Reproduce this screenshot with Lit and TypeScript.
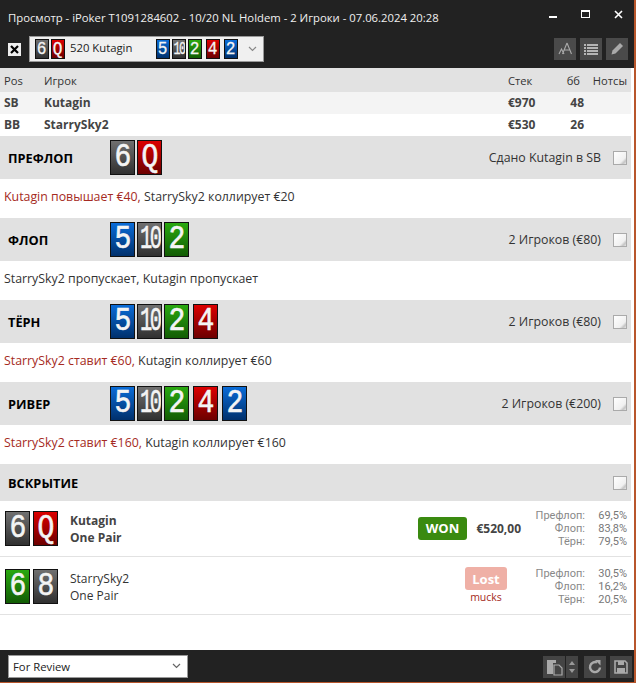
import { LitElement, html, css, svg } from "lit";
import { customElement } from "lit/decorators.js";

type C = [string, string];

@customElement("app-root")
export class AppRoot extends LitElement {
  static styles = css`
    :host { display: block; width: 636px; height: 683px; background: #b8562c; font-family: "Open Sans", "Noto Sans", sans-serif; font-size: 12px; color: #333; overflow: hidden; }
    .win { width: 634px; height: 682px; display: flex; flex-direction: column; background: #fff; }
    .title { height: 34px; flex: none; background: #222; color: #f0f0f0; display: flex; align-items: center; padding-left: 8px; font-size: 11.3px; }
    .wc { margin-left: auto; margin-right: -1.5px; display: flex; align-items: center; }
    .wc span { width: 33px; height: 20px; display: flex; align-items: center; justify-content: center; }
    .wc .up { position: relative; top: -3px; }
    .tool { height: 30px; padding-bottom: 4px; flex: none; background: #222; display: flex; align-items: center; padding-left: 8px; }
    .x { width: 13px; height: 13px; background: #eee; display: flex; align-items: center; justify-content: center; margin-right: 8px; }
    .combo { width: 235px; height: 26px; box-sizing: border-box; background: #f0f0f0; border: 1px solid #999; display: flex; align-items: center; padding-left: 5px; font-size: 11.3px; color: #222; }
    .combo .nm { margin-left: 5px; width: 86px; position: relative; top: -2px; }
    .tcards { display: flex; gap: 2px; }
    .tcards .gap { margin-left: 2px; }
    .combo .chev { margin-left: auto; margin-right: 6px; display: flex; }
    .tbtns { margin-left: auto; margin-right: 6px; display: flex; gap: 4px; }
    .tb { width: 22px; height: 22px; background: #4a4a4a; display: flex; align-items: center; justify-content: center; }
    .card { box-sizing: border-box; border: 1px solid #111; display: flex; align-items: center; justify-content: center; color: #f4f4f4; font-family: "Liberation Mono", "DejaVu Sans Mono", monospace; overflow: hidden; }
    .card span { display: inline-block; transform: scaleX(0.85); }
    .card.ten span { letter-spacing: -0.12em; transform: scaleX(0.62); }
    .card.big { width: 25px; height: 35px; font-size: 33px; -webkit-text-stroke: 0.6px #f4f4f4; }
    .card.sm { width: 14px; height: 20px; font-size: 19px; -webkit-text-stroke: 0.3px #f4f4f4; }
    .k { background: linear-gradient(#707070, #303030); }
    .h { background: linear-gradient(#dc0000, #6c0000); }
    .d { background: linear-gradient(#0a6cd8, #00306c); }
    .c { background: linear-gradient(#2aa810, #125c04); }
    .tbl { flex: none; margin-right: 3px; }
    .row { height: 22px; display: grid; grid-template-columns: 40px 464px 52px 24px 43px; align-items: center; padding-left: 4px; }
    .row.hd { height: 24px; background: #e2e2e2; padding-top: 1px; box-sizing: border-box; }
    .row.hd div { font-size: 11.2px; }
    .row.hd .bb { padding-right: 4px; }
    .row.a { background: #f4f4f4; }
    .row.p { font-weight: 700; color: #444; padding-bottom: 2px; box-sizing: border-box; }
    .r { text-align: right; }
    .sec { height: 43px; flex: none; background: #e1e1e1; display: flex; align-items: center; padding-left: 8px; margin-right: 3px; }
    .sec .lb { width: 102px; font-weight: 700; color: #000; font-size: 12.8px; }
    .sec .cards { display: flex; gap: 2px; }
    .sec .cards .gap { margin-left: 2px; }
    .sec .info { margin-left: auto; color: #333; font-size: 12.35px; }
    .chk { width: 14px; height: 14px; box-sizing: border-box; background: linear-gradient(135deg, #fff 0, #f0f0f0 70%, #c4c4c4 85%, #e8e8e8 100%); border: 1px solid #aaa; margin: 0 4px 0 12px; }
    .act { height: 34px; padding-bottom: 5px; flex: none; display: flex; align-items: center; padding-left: 4px; font-size: 12.35px; }
    .red { color: #a52a22; }
    .sec.sd { height: 37px; }
    .pl { flex: none; height: 56px; box-sizing: border-box; display: flex; align-items: center; padding: 0 0 1px 5px; border-bottom: 1px solid #e2e2e2; margin-right: 3px; }
    .pl.two { height: 58px; padding-top: 2px; }
    .pl .cards { display: flex; gap: 3px; }
    .who { margin-left: 12px; margin-top: 2px; line-height: 17px; }
    .who.b { font-weight: 700; color: #444; }
    .res { margin-left: auto; display: flex; align-items: center; }
    .won { background: #3a8a10; color: #fff; font-weight: 700; font-size: 13px; border-radius: 3px; width: 49px; height: 23px; display: flex; align-items: center; justify-content: center; }
    .amt { font-weight: 700; color: #444; width: 54px; text-align: right; }
    .lost { width: 42px; margin-right: 14px; display: flex; flex-direction: column; align-items: center; }
    .lostb { background: #efb0a6; color: #fff; font-weight: 700; font-size: 13px; border-radius: 3px; width: 42px; height: 23px; display: flex; align-items: center; justify-content: center; }
    .mucks { color: #a52a22; font-size: 10.5px; line-height: 15px; }
    .eq { margin-left: 12px; width: 94px; display: grid; grid-template-columns: 1fr 42px; font-family: Roboto, "Open Sans", sans-serif; font-size: 11px; line-height: 13px; color: #888; margin-right: 4px; text-align: right; }
    .eq span, .eq b { justify-self: end; }
    .eq b { font-weight: 400; color: #777; }
    .sp { flex: 1; }
    .foot { height: 32px; flex: none; background: #222; display: flex; align-items: center; padding-left: 8px; }
    .sel { width: 180px; height: 23px; box-sizing: border-box; background: #fff; border: 1px solid #999; display: flex; align-items: center; padding: 0 4px; font-size: 11.3px; color: #222; }
    .sel svg { margin-left: auto; margin-right: 2px; }
    .fbtns { margin-left: auto; margin-right: 2px; display: flex; align-items: center; position: relative; top: 1px; }
    .fb { height: 22px; background: #444; display: flex; align-items: center; justify-content: center; width: 22px; }
    .fb.arrows { width: 12px; margin: 0 6px 0 1px; }
    .fb.re { margin-right: 4px; }
  `;

  card(v: string, s: string, size: string, gap = false) {
    return html`<div class="card ${size} ${s} ${v === "10" ? "ten" : ""} ${gap ? "gap" : ""}"><span>${v}</span></div>`;
  }
  cards(list: C[], size = "big") {
    return list.map(([v, s], i) => this.card(v, s, size, i > 2));
  }
  sec(label: string, list: C[], info: string) {
    return html`<div class="sec"><div class="lb">${label}</div><div class="cards">${this.cards(list)}</div><div class="info">${info}</div><div class="chk"></div></div>`;
  }
  eq(a: string, b: string, c: string) {
    return html`<div class="eq"><span>Префлоп:</span><b>${a}</b><span>Флоп:</span><b>${b}</b><span>Тёрн:</span><b>${c}</b></div>`;
  }
  render() {
    const hole: C[] = [["6", "k"], ["Q", "h"]];
    const flop: C[] = [["5", "d"], ["10", "k"], ["2", "c"]];
    const turn: C[] = [...flop, ["4", "h"]];
    const river: C[] = [...turn, ["2", "d"]];
    const pencil = svg`<path d="M2.5 13.5 L3.5 9.5 L11 2 L14 5 L6.5 12.5 Z" fill="#aaa"/>`;
    return html`<div class="win">
      <div class="title">Просмотр - iPoker T1091284602 - 10/20 NL Holdem - 2 Игроки - 07.06.2024 20:28
        <div class="wc">
          <span><svg width="10" height="10"><rect x="1" y="4" width="8" height="2" fill="#fff"/></svg></span>
          <span class="up"><svg width="10" height="10"><rect x="0.5" y="1.5" width="8" height="7" fill="none" stroke="#fff"/><rect x="0" y="1" width="9" height="2" fill="#fff"/></svg></span>
          <span class="up"><svg width="10" height="10"><path d="M1 2 L8 9 M8 2 L1 9" stroke="#fff" stroke-width="1.6"/></svg></span>
        </div>
      </div>
      <div class="tool">
        <div class="x"><svg width="9" height="9"><path d="M1 1 L8 8 M8 1 L1 8" stroke="#000" stroke-width="2.2"/></svg></div>
        <div class="combo">
          <div class="tcards">${this.cards(hole, "sm")}</div>
          <div class="nm">520 Kutagin</div>
          <div class="tcards">${this.cards(river, "sm")}</div>
          <div class="chev"><svg width="9" height="6"><path d="M1 1 L4.5 4.5 L8 1" fill="none" stroke="#888" stroke-width="1.2"/></svg></div>
        </div>
        <div class="tbtns">
          <div class="tb"><svg width="18" height="16"><path d="M3 13 L5.5 8 L8 13 M11 2 L6.5 13 M11 2 L15.5 13 M8.5 9 H13.5" fill="none" stroke="#aaa" stroke-width="1.1"/></svg></div>
          <div class="tb"><svg width="16" height="14"><g fill="#b5b5b5"><rect x="1" y="2" width="2" height="2"/><rect x="4" y="2" width="11" height="2"/><rect x="1" y="5" width="2" height="2"/><rect x="4" y="5" width="11" height="2"/><rect x="1" y="8" width="2" height="2"/><rect x="4" y="8" width="11" height="2"/><rect x="1" y="11" width="2" height="2"/><rect x="4" y="11" width="11" height="2"/></g></svg></div>
          <div class="tb"><svg width="16" height="16">${pencil}</svg></div>
        </div>
      </div>
      <div class="tbl">
        <div class="row hd"><div>Pos</div><div>Игрок</div><div>Стек</div><div class="r bb">бб</div><div class="r">Нотсы</div></div>
        <div class="row a p"><div>SB</div><div>Kutagin</div><div>€970</div><div class="r">48</div><div></div></div>
        <div class="row p"><div>BB</div><div>StarrySky2</div><div>€530</div><div class="r">26</div><div></div></div>
      </div>
      ${this.sec("ПРЕФЛОП", hole, "Сдано Kutagin в SB")}
      <div class="act"><span class="red">Kutagin повышает €40,</span>&nbsp;StarrySky2 коллирует €20</div>
      ${this.sec("ФЛОП", flop, "2 Игроков (€80)")}
      <div class="act">StarrySky2 пропускает, Kutagin пропускает</div>
      ${this.sec("ТЁРН", turn, "2 Игроков (€80)")}
      <div class="act"><span class="red">StarrySky2 ставит €60,</span>&nbsp;Kutagin коллирует €60</div>
      ${this.sec("РИВЕР", river, "2 Игроков (€200)")}
      <div class="act"><span class="red">StarrySky2 ставит €160,</span>&nbsp;Kutagin коллирует €160</div>
      <div class="sec sd"><div class="lb">ВСКРЫТИЕ</div><div class="info"></div><div class="chk"></div></div>
      <div class="pl"><div class="cards">${this.cards(hole)}</div><div class="who b">Kutagin<br />One Pair</div>
        <div class="res"><div class="won">WON</div><div class="amt">€520,00</div>${this.eq("69,5%", "83,8%", "79,5%")}</div></div>
      <div class="pl two"><div class="cards">${this.cards([["6", "c"], ["8", "k"]])}</div><div class="who">StarrySky2<br />One Pair</div>
        <div class="res"><div class="lost"><div class="lostb">Lost</div><div class="mucks">mucks</div></div>${this.eq("30,5%", "16,2%", "20,5%")}</div></div>
      <div class="sp"></div>
      <div class="foot">
        <div class="sel">For Review<svg width="9" height="6"><path d="M1 1 L4.5 4.5 L8 1" fill="none" stroke="#666" stroke-width="1.2"/></svg></div>
        <div class="fbtns">
          <div class="fb"><svg width="20" height="20"><path d="M3 3 H12 V6 H9 V17 H3 Z" fill="#aaa"/><path d="M10 8 H15 L18 11 V18 H10 Z" fill="#444" stroke="#aaa" stroke-width="1.2"/></svg></div>
          <div class="fb arrows"><svg width="8" height="14"><path d="M4 1 L7 5 H1 Z M4 13 L7 9 H1 Z" fill="#999"/></svg></div>
          <div class="fb re"><svg width="16" height="16"><path d="M13 8.5 A5 5 0 1 1 10 3.5" fill="none" stroke="#aaa" stroke-width="2.4"/><path d="M8 1 L13.5 1 V6.5 Z" fill="#aaa"/></svg></div>
          <div class="fb"><svg width="16" height="16"><path d="M2 2 H12 L14 4 V14 H2 Z" fill="none" stroke="#aaa" stroke-width="1.6"/><rect x="5" y="2" width="6" height="4" fill="#aaa"/><rect x="4" y="9" width="8" height="5" fill="#aaa"/></svg></div>
        </div>
      </div>
    </div>`;
  }
}
